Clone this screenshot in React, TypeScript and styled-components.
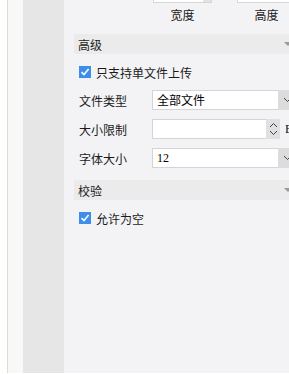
import React from 'react';
import styled, { createGlobalStyle } from 'styled-components';

const GlobalStyle = createGlobalStyle`
  html, body {
    margin: 0;
    padding: 0;
    background: #ffffff;
  }
  body {
    font-family: "Noto Sans CJK SC", "Noto Sans", sans-serif;
    font-size: 12px;
    color: #1a1a1a;
  }
`;

const Shell = styled.div`
  display: flex;
  height: 373px;
  width: 289px;
  overflow: hidden;
`;

const Gap = styled.div`
  width: 7px;
  flex: none;
  background: #ffffff;
`;

const Rail = styled.div`
  width: 15px;
  flex: none;
  background: #f8f8f6;
  border-left: 1px solid #dedcd4;
`;

const Sidebar = styled.div`
  width: 41px;
  flex: none;
  background: #e6e6e6;
`;

const Panel = styled.div`
  flex: none;
  width: 240px;
  background: #f3f3f5;
  padding-left: 10px;
  box-sizing: border-box;
  display: flex;
  flex-direction: column;
`;

const SizeRow = styled.div`
  display: flex;
  gap: 25px;
  margin-top: -17px;
  padding-left: 79px;
  height: 51px;
`;

const SizeGroup = styled.div`
  display: flex;
  flex-direction: column;
  align-items: center;
  width: 59px;
`;

const SizeBox = styled.div`
  display: flex;
  width: 100%;
  height: 20px;
  box-sizing: border-box;
  border: 1px solid #d6d6d6;
  background: #ffffff;
  justify-content: flex-end;
`;

const SizeSpin = styled.div`
  width: 8px;
  background: #e2e2e2;
`;

const SizeLabel = styled.div`
  margin-top: 5px;
  line-height: 14px;
`;

const Header = styled.div`
  display: flex;
  align-items: center;
  justify-content: space-between;
  height: 20px;
  width: 222px;
  flex: none;
  padding: 0 4px;
  box-sizing: border-box;
  background: #ebebeb;
`;

const Caret = styled.span`
  width: 0;
  height: 0;
  border-left: 4px solid transparent;
  border-right: 4px solid transparent;
  border-top: 4px solid #9a9a9a;
`;

const CheckRow = styled.div`
  display: flex;
  align-items: center;
  height: 36px;
  padding-left: 5px;
`;

const FieldList = styled.div`
  display: flex;
  flex-direction: column;
  gap: 9px;
  margin-bottom: 12px;
`;

const Row = styled.div`
  display: flex;
  align-items: center;
  height: 20px;
  padding-left: 5px;
`;

const Label = styled.div`
  width: 73px;
  flex: none;
`;

const Check = styled.span`
  width: 12px;
  height: 12px;
  flex: none;
  background: #3b8eea;
  margin-right: 5px;
  display: flex;
  align-items: center;
  justify-content: center;
`;

const Field = styled.div<{ $w: number }>`
  display: flex;
  width: ${(p) => p.$w}px;
  height: 20px;
  flex: none;
  box-sizing: border-box;
  border: 1px solid #d4d4d4;
  background: #ffffff;
`;

const FieldText = styled.div<{ $serif?: boolean }>`
  flex: 1;
  padding-left: 4px;
  line-height: 18px;
  font-family: ${(p) =>
    p.$serif ? '"Liberation Serif", serif' : '"Noto Sans CJK SC", sans-serif'};
  color: #000;
`;

const DropBtn = styled.div`
  width: 18px;
  margin: -1px -1px -1px 0;
  background: #dcdcdc;
  display: flex;
  align-items: center;
  justify-content: center;
`;

const Spinner = styled.div`
  width: 14px;
  margin: -1px -1px -1px 0;
  background: #e0e0e0;
  display: flex;
  flex-direction: column;
  align-items: center;
  justify-content: center;
  gap: 2px;
`;

const Unit = styled.span`
  margin-left: 5px;
  font-family: "Liberation Serif", serif;
  font-size: 12px;
  color: #111;
`;

const Chevron = ({ up }: { up?: boolean }) => (
  <svg width="9" height="6" viewBox="0 0 9 6">
    <path
      d={up ? 'M1 5 L4.5 1.5 L8 5' : 'M1 1 L4.5 4.5 L8 1'}
      fill="none"
      stroke="#444"
      strokeWidth="1"
    />
  </svg>
);

const Tick = () => (
  <Check>
    <svg width="10" height="10" viewBox="0 0 10 10">
      <path d="M1.5 5.2 L4 7.6 L8.6 2" fill="none" stroke="#fff" strokeWidth="1.6" />
    </svg>
  </Check>
);

const Select = ({ value, serif }: { value: string; serif?: boolean }) => (
  <Field $w={144}>
    <FieldText $serif={serif}>{value}</FieldText>
    <DropBtn>
      <Chevron />
    </DropBtn>
  </Field>
);

export default function App() {
  return (
    <>
      <GlobalStyle />
      <Shell>
        <Gap />
        <Rail />
        <Sidebar />
        <Panel>
          <SizeRow>
            <SizeGroup>
              <SizeBox>
                <SizeSpin />
              </SizeBox>
              <SizeLabel>宽度</SizeLabel>
            </SizeGroup>
            <SizeGroup>
              <SizeBox />
              <SizeLabel>高度</SizeLabel>
            </SizeGroup>
          </SizeRow>
          <Header>
            <span>高级</span>
            <Caret />
          </Header>
          <CheckRow>
            <Tick />
            <span>只支持单文件上传</span>
          </CheckRow>
          <FieldList>
            <Row>
              <Label>文件类型</Label>
              <Select value="全部文件" />
            </Row>
            <Row>
              <Label>大小限制</Label>
              <Field $w={128}>
                <FieldText />
                <Spinner>
                  <Chevron up />
                  <Chevron />
                </Spinner>
              </Field>
              <Unit>B</Unit>
            </Row>
            <Row>
              <Label>字体大小</Label>
              <Select value="12" serif />
            </Row>
          </FieldList>
          <Header>
            <span>校验</span>
            <Caret />
          </Header>
          <CheckRow>
            <Tick />
            <span>允许为空</span>
          </CheckRow>
        </Panel>
      </Shell>
    </>
  );
}
